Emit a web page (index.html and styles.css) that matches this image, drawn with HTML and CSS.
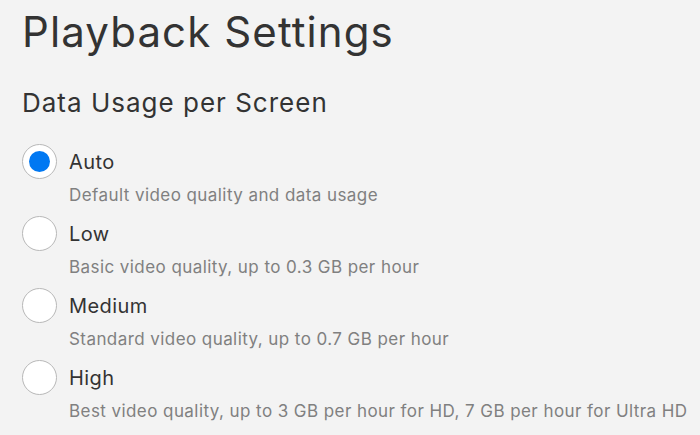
FILE: index.html
```html
<!DOCTYPE html>
<html>
	<head>
		<meta charset="utf-8">
		<title>Playback Settings</title>
		<link rel="stylesheet" href="styles.css">
	</head>
	<body>
		<div class="settings">
			<h1 class="title">Playback Settings</h1>
			<h2 class="subtitle">Data Usage per Screen</h2>

			<!-- 选项列表 -->
			<div class="option">
				<span class="radio checked"></span>
				<span class="label">Auto</span>
				<span class="desc">Default video quality and data usage</span>
			</div>
			<div class="option">
				<span class="radio"></span>
				<span class="label">Low</span>
				<span class="desc">Basic video quality, up to 0.3 GB per hour</span>
			</div>
			<div class="option">
				<span class="radio"></span>
				<span class="label">Medium</span>
				<span class="desc">Standard video quality, up to 0.7 GB per hour</span>
			</div>
			<div class="option">
				<span class="radio"></span>
				<span class="label">High</span>
				<span class="desc">Best video quality, up to 3 GB per hour for HD, 7 GB per hour for Ultra HD</span>
			</div>
		</div>
	</body>
</html>
```

FILE: styles.css
```css
/* 通用样式 */
* {
	margin: 0;
	padding: 0;
	box-sizing: border-box;
}

body {
	font-family: Inter, "Noto Sans", sans-serif;
	background-color: #f3f3f3;
	color: #333;
	overflow: hidden;
}

.settings {
	padding: 7px 0 0 22px;
}

/* 标题 */
.title {
	font-size: 42px;
	font-weight: 400;
	line-height: 50px;
	letter-spacing: 1.1px;
}

.subtitle {
	margin-top: 30px;
	margin-bottom: 25px;
	font-size: 26px;
	font-weight: 400;
	line-height: 32px;
	letter-spacing: 1px;
}

/* 单选项 */
.option {
	display: grid;
	grid-template-columns: 35px 1fr;
	column-gap: 12px;
	align-items: center;
	margin-bottom: 11px;
}

.radio {
	width: 35px;
	height: 35px;
	border-radius: 50%;
	border: 1px solid #b8b8b8;
	background-color: #fff;
	display: flex;
	align-items: center;
	justify-content: center;
}

.radio.checked::after {
	content: "";
	width: 21px;
	height: 21px;
	border-radius: 50%;
	background-color: #0078f2;
}

.label {
	font-size: 20px;
	line-height: 24px;
	letter-spacing: 0.4px;
}

.desc {
	grid-column: 2;
	margin-top: 6px;
	font-size: 17px;
	line-height: 20px;
	letter-spacing: 0.43px;
	color: #808080;
}
```
